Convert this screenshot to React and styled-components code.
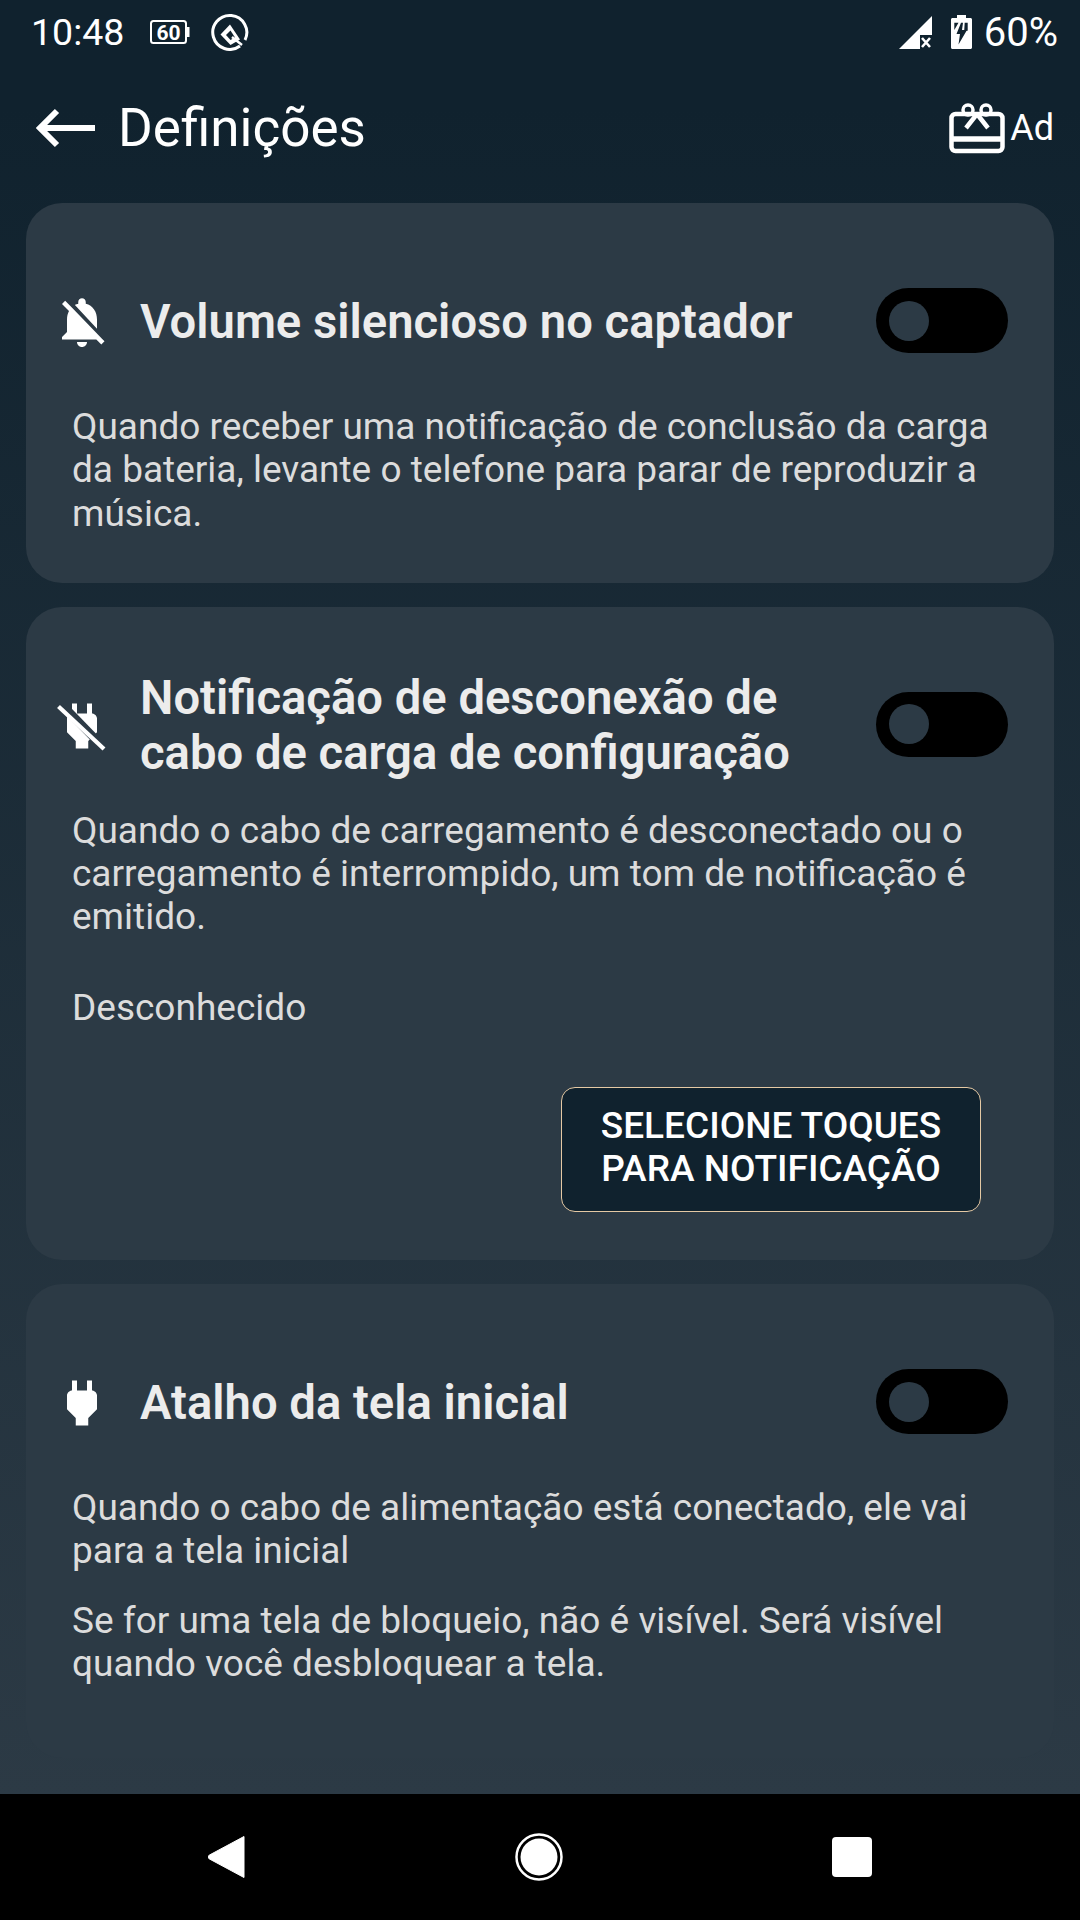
import React from "react";
import styled, { createGlobalStyle } from "styled-components";

const GlobalStyle = createGlobalStyle`
  html, body {
    margin: 0;
    padding: 0;
    background: #000;
  }
  * {
    box-sizing: border-box;
  }
`;

const Screen = styled.div`
  width: 1080px;
  height: 1920px;
  display: flex;
  flex-direction: column;
  font-family: Roboto, "Liberation Sans", sans-serif;
  overflow: hidden;
`;

const Page = styled.div`
  flex: 1;
  display: flex;
  flex-direction: column;
  background: linear-gradient(180deg, #10222e 0%, #10222e 6%, #2c3a45 100%);
`;

const StatusBar = styled.div`
  height: 64px;
  display: flex;
  align-items: center;
  justify-content: space-between;
  padding: 0 22px 0 31px;
  color: #fff;
`;

const StatusGroup = styled.div`
  display: flex;
  align-items: center;
  gap: ${(p) => p.$gap || 0}px;
`;

const Time = styled.span`
  width: 92px;
  margin-right: 27px;
  font-size: 37.5px;
  white-space: nowrap;
`;

const Percent = styled.span`
  font-size: 40px;
`;

const Header = styled.div`
  height: 139px;
  display: flex;
  align-items: center;
  padding: 0 26px 12px 36px;
  color: #fff;
`;

const Title = styled.h1`
  flex: 1;
  margin: 0 0 0 22px;
  font-size: 53px;
  font-weight: 400;
`;

const AdLabel = styled.span`
  font-size: 36px;
  margin-left: 5px;
`;

const CardList = styled.div`
  display: flex;
  flex-direction: column;
  gap: 24px;
  padding: 0 26px;
`;

const Card = styled.section`
  background: #2c3a45;
  border-radius: 36px;
  padding: 64px 46px 48px 46px;
`;

const CardHead = styled.div`
  min-height: 110px;
  display: flex;
  align-items: center;
  margin-bottom: 28px;
`;

const IconSlot = styled.div`
  width: 68px;
  display: flex;
  justify-content: center;
  color: #fff;
  margin-left: -24px;
`;

const CardTitle = styled.h2`
  flex: 1;
  margin: 0 0 0 24px;
  font-size: 47.2px;
  line-height: 55px;
  font-weight: 600;
  color: #ececec;
`;

const Toggle = styled.div`
  width: 132px;
  height: 65px;
  border-radius: 33px;
  background: #000;
  display: flex;
  align-items: center;
  padding-left: 13px;
  margin-top: -3px;
`;

const Knob = styled.div`
  width: 40px;
  height: 40px;
  border-radius: 50%;
  background: #2c3a45;
`;

const Body = styled.p`
  margin: 0 0 ${(p) => p.$after || 0}px;
  font-size: 37px;
  line-height: 43.3px;
  color: #dcdcdc;
`;

const ButtonRow = styled.div`
  display: flex;
  justify-content: flex-end;
  padding-right: 27px;
`;

const RingButton = styled.button`
  width: 420px;
  height: 125px;
  background: #10222e;
  border: 1px solid #e5c9a4;
  border-radius: 14px;
  color: #fff;
  font-family: inherit;
  font-size: 37px;
  line-height: 43px;
  font-weight: 500;
  padding: 0 0 6px;
`;

const NavBar = styled.div`
  height: 126px;
  background: #000;
  display: flex;
  align-items: center;
  justify-content: center;
  gap: 269px;
`;

const Glyph = styled.svg`
  display: block;
  flex: none;
`;

const BellOff = () => (
  <Glyph width="60" height="60" viewBox="0 0 24 24" fill="currentColor">
    <path d="M20 18.69L7.84 6.14 5.27 3.49 4 4.76l2.8 2.8v.01c-.52.99-.8 2.16-.8 3.42v5l-2 2v1h13.73l2 2L21 19.72l-1-1.03zM12 22c1.11 0 2-.89 2-2h-4c0 1.11.89 2 2 2zm6-7.32V11c0-3.08-1.64-5.64-4.5-6.32V4c0-.83-.67-1.5-1.5-1.5s-1.5.67-1.5 1.5v.68c-.15.03-.29.08-.42.12-.1.03-.2.07-.3.11h-.01c-.2.08-.4.17-.59.27-.01 0-.01 0-.02.01L18 14.68z" />
  </Glyph>
);

const plug = "M16 7V3h-2v4h-4V3H8v4h-.01C7 6.99 6 7.99 6 8.99v5.49L9.5 18v3h5v-3l3.5-3.51v-5.5c0-1-1-2-2-2z";

const Plug = () => (
  <Glyph width="60" height="60" viewBox="0 0 24 24" fill="currentColor">
    <path d={plug} />
  </Glyph>
);

const PlugOff = () => (
  <Glyph width="60" height="60" viewBox="0 0 24 24" fill="currentColor">
    <path d={plug} />
    <path d="M4 3.500L20.500 20.500" stroke="#2c3a45" strokeWidth="3.400" />
    <path d="M2.600 4.200L20.800 21.200" stroke="currentColor" strokeWidth="1.700" />
  </Glyph>
);

const BackArrow = () => (
  <Glyph width="60" height="40" viewBox="0 0 60 40" fill="none" stroke="#fff" strokeWidth="6">
    <path d="M59 20H4" />
    <path d="M21 3L4 20l17 17" />
  </Glyph>
);

const GiftCard = () => (
  <Glyph width="56" height="52" viewBox="0 0 56 52" fill="none" stroke="#fff" strokeWidth="4.500" strokeLinejoin="round">
    <rect x="2.500" y="12" width="51" height="37" rx="4" />
    <path d="M2.500 37h51" strokeWidth="5.500" />
    <circle cx="19" cy="8" r="5" strokeWidth="3.500" />
    <circle cx="37" cy="8" r="5" strokeWidth="3.500" />
    <path d="M28 12L17 26M28 12l11 14" />
  </Glyph>
);

const BatteryBadge = () => (
  <Glyph width="40" height="24" viewBox="0 0 40 24" fill="none">
    <rect x="1" y="1" width="35" height="22" rx="2.500" stroke="#fff" strokeWidth="2" />
    <rect x="36" y="7" width="3.500" height="10" fill="#fff" />
    <text x="18.500" y="19.500" textAnchor="middle" fill="#fff" fontFamily="Roboto" fontWeight="700" fontSize="21">60</text>
  </Glyph>
);

const QuickIcon = () => (
  <Glyph width="38" height="38" viewBox="0 0 38 38" fill="none">
    <path d="M29 33A17 17 0 1 1 34 27" stroke="#fff" strokeWidth="3" />
    <path d="M9.500 21.500L19 11.500l10 15-9.500 5.500z" fill="#fff" />
    <path d="M15 22l4.500-4.500 4.500 7-4.500 2.500z" fill="#10222e" />
    <path d="M21 24l10 8" stroke="#fff" strokeWidth="2.500" />
  </Glyph>
);

const SignalIcon = () => (
  <Glyph width="33" height="33" viewBox="0 0 33 33">
    <path d="M33 0V19H21V33H0z" fill="#fff" />
    <path d="M23 22l8 9M31 22l-8 9" stroke="#fff" strokeWidth="2.600" />
  </Glyph>
);

const ChargingIcon = () => (
  <Glyph width="21" height="34" viewBox="0 0 21 34">
    <path d="M6 0h9v3h4.500c.8 0 1.500.7 1.500 1.500V32.500c0 .8-.7 1.500-1.500 1.500H1.500C.7 34 0 33.300 0 32.500V4.500C0 3.700.7 3 1.500 3H6z" fill="#fff" />
    <path d="M3.300 7.700h4.200L3.300 15zM13.700 7.700h3v8h-3.500z" fill="#10222e" />
    <path d="M10 7.700h2l-1 7.300h5L7.500 29.500 9 19H5.500z" fill="#10222e" />
  </Glyph>
);

const BackKey = () => (
  <Glyph width="38" height="44" viewBox="0 0 38 44">
    <path d="M36 1.500V42.500L1.500 24a2.200 2.200 0 0 1 0-4z" fill="#fff" stroke="#fff" strokeLinejoin="round" />
  </Glyph>
);

const HomeKey = () => (
  <Glyph width="48" height="48" viewBox="0 0 48 48">
    <circle cx="24" cy="24" r="22.500" fill="none" stroke="#fff" strokeWidth="2.500" />
    <circle cx="24" cy="24" r="18.500" fill="#fff" />
  </Glyph>
);

const RecentKey = () => (
  <Glyph width="40" height="40" viewBox="0 0 40 40">
    <rect width="40" height="40" rx="4" fill="#fff" />
  </Glyph>
);

export default function App() {
  return (
    <Screen>
      <GlobalStyle />
      <Page>
        <StatusBar>
          <StatusGroup>
            <Time>10:48</Time>
            <StatusGroup $gap={21}>
              <BatteryBadge />
              <QuickIcon />
            </StatusGroup>
          </StatusGroup>
          <StatusGroup $gap={12}>
            <StatusGroup $gap={19}>
              <SignalIcon />
              <ChargingIcon />
            </StatusGroup>
            <Percent>60%</Percent>
          </StatusGroup>
        </StatusBar>
        <Header>
          <BackArrow />
          <Title>Definições</Title>
          <GiftCard />
          <AdLabel>Ad</AdLabel>
        </Header>
        <CardList>
          <Card>
            <CardHead>
              <IconSlot><BellOff /></IconSlot>
              <CardTitle>Volume silencioso no captador</CardTitle>
              <Toggle><Knob /></Toggle>
            </CardHead>
            <Body>
              Quando receber uma notificação de conclusão da carga da bateria, levante o telefone para parar de reproduzir a música.
            </Body>
          </Card>
          <Card>
            <CardHead>
              <IconSlot><PlugOff /></IconSlot>
              <CardTitle>Notificação de desconexão de cabo de carga de configuração</CardTitle>
              <Toggle><Knob /></Toggle>
            </CardHead>
            <Body $after={47}>
              Quando o cabo de carregamento é desconectado ou o carregamento é interrompido, um tom de notificação é emitido.
            </Body>
            <Body $after={58}>Desconhecido</Body>
            <ButtonRow>
              <RingButton>SELECIONE TOQUES<br />PARA NOTIFICAÇÃO</RingButton>
            </ButtonRow>
          </Card>
          <Card>
            <CardHead>
              <IconSlot><Plug /></IconSlot>
              <CardTitle>Atalho da tela inicial</CardTitle>
              <Toggle><Knob /></Toggle>
            </CardHead>
            <Body $after={26}>
              Quando o cabo de alimentação está conectado, ele vai para a tela inicial
            </Body>
            <Body $after={25}>
              Se for uma tela de bloqueio, não é visível. Será visível quando você desbloquear a tela.
            </Body>
          </Card>
        </CardList>
      </Page>
      <NavBar>
        <BackKey />
        <HomeKey />
        <RecentKey />
      </NavBar>
    </Screen>
  );
}
